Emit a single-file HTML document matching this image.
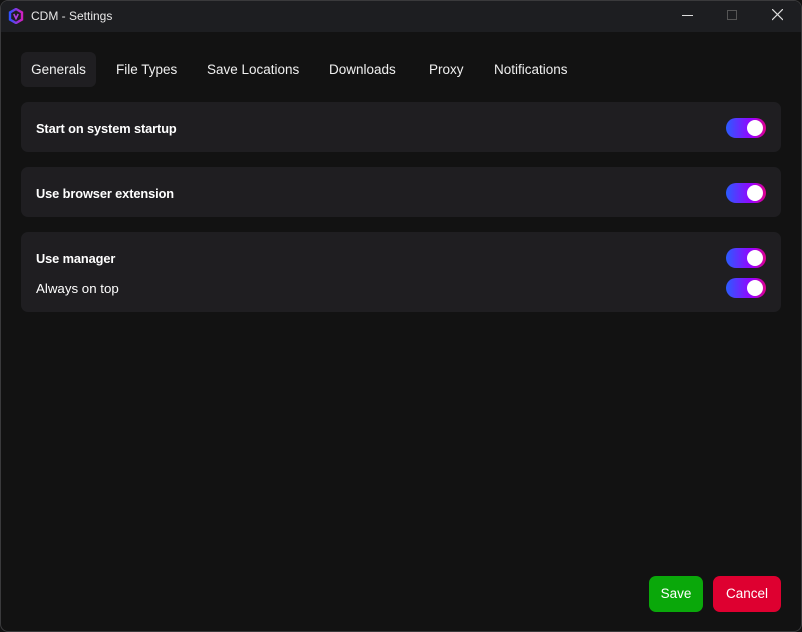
<!DOCTYPE html>
<html><head><meta charset="utf-8"><style>
*{box-sizing:border-box;margin:0;padding:0}
html,body{width:802px;height:632px;background:#121212;overflow:hidden;font-family:"Liberation Sans",sans-serif;color:#fff}
.win{position:absolute;left:0;top:0;width:802px;height:632px;border:1px solid #3a3a3c;border-radius:8px;background:#121212;overflow:hidden}
.title{height:31px;background:#1d1e21;position:relative}
.title .t{position:absolute;left:30px;top:8px;font-size:12px;color:#e8e8e8}
.title svg.logo{position:absolute;left:7px;top:7px}
.ctl{position:absolute;top:0;height:31px}
.tab{position:absolute;top:51px;height:35px;line-height:35px;font-size:13.5px;color:#f0f0f0;white-space:nowrap}
.tab.a{background:#1f1e21;border-radius:6px;left:20px;width:75px;text-align:center}
.card{position:absolute;left:20px;width:760px;background:#1f1e21;border-radius:7px}
.lbl{position:absolute;left:15px;font-size:13.3px}
.b{font-weight:bold;font-size:12.8px;letter-spacing:-0.1px}
.tg{position:absolute;left:705px;width:40px;height:20px;border-radius:10px;background:linear-gradient(90deg,#2a5cff,#9a00ff 65%,#e0008a);}
.tg::after{content:"";position:absolute;right:3px;top:2px;width:16px;height:16px;border-radius:50%;background:#fff}
.btn{position:absolute;top:575px;height:36px;border-radius:7px;font-size:13.5px;text-align:center;line-height:36px}
</style></head><body><div class="win">
<div class="title">
<svg class="logo" width="16" height="16" viewBox="0 0 16 16"><defs><linearGradient id="g" x1="0" x2="1"><stop offset="0" stop-color="#3050ff"/><stop offset="1" stop-color="#d020c0"/></linearGradient></defs><polygon points="8,1 14,4.5 14,11.5 8,15 2,11.5 2,4.5" fill="none" stroke="url(#g)" stroke-width="2.4"/><path d="M5.8,6 L8,10.5 L10.2,6" fill="none" stroke="#b040e0" stroke-width="1.6"/></svg>
<div class="t">CDM - Settings</div>
<div class="ctl" style="left:681px;top:14px;width:11px;height:1px;background:#ddd"></div>
<div class="ctl" style="left:726px;top:9px;width:10px;height:10px;border:1px solid #555"></div>
<svg class="ctl" style="left:771px;top:8px" width="11" height="11"><path d="M0,0L11,11M11,0L0,11" stroke="#ddd" stroke-width="1.2"/></svg>
</div>
<div class="tab a">Generals</div>
<div class="tab" style="left:115px">File Types</div>
<div class="tab" style="left:206px">Save Locations</div>
<div class="tab" style="left:328px">Downloads</div>
<div class="tab" style="left:428px">Proxy</div>
<div class="tab" style="left:493px">Notifications</div>
<div class="card" style="top:101px;height:50px"><div class="lbl b" style="top:19px">Start on system startup</div><div class="tg" style="top:16px"></div></div>
<div class="card" style="top:166px;height:50px"><div class="lbl b" style="top:19px">Use browser extension</div><div class="tg" style="top:16px"></div></div>
<div class="card" style="top:231px;height:80px"><div class="lbl b" style="top:19px">Use manager</div><div class="tg" style="top:16px"></div>
<div class="lbl" style="top:49px">Always on top</div><div class="tg" style="top:46px"></div></div>
<div class="btn" style="left:648px;width:54px;background:#0aa80a">Save</div>
<div class="btn" style="left:712px;width:68px;background:#de0030">Cancel</div>
</div></body></html>
